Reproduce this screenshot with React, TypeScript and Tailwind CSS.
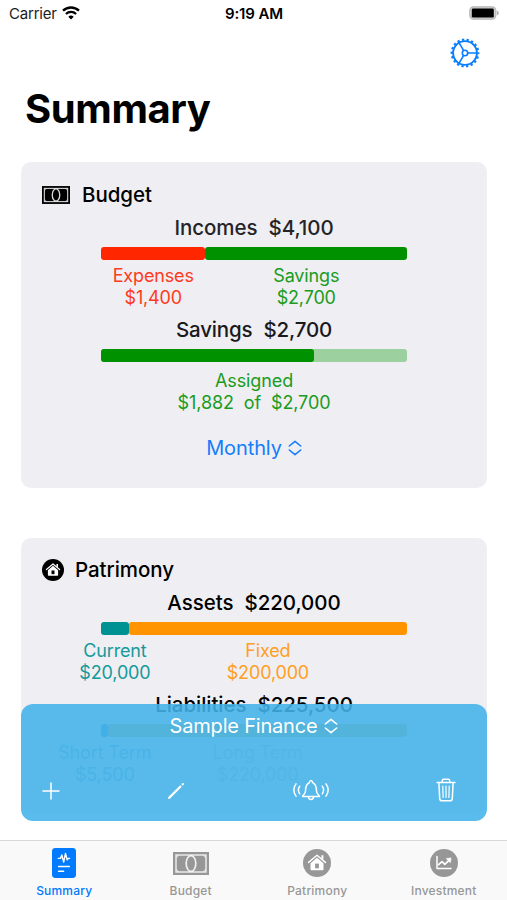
import type { ReactNode } from 'react';

type Segment = {
  weight: number;
  bar: string;
  text?: string;
  label?: string;
  value?: string;
};

function Banknote({ className }: { className: string }) {
  return (
    <svg viewBox="0 0 36 23" className={className}>
      <rect width="36" height="23" fill="currentColor" />
      <rect x="3" y="3" width="30" height="17" fill="none" stroke="white" strokeWidth="1.4" strokeOpacity="0.85" />
      <path d="M3 5.5Q5 5 5.4 3M33 5.5Q31 5 30.6 3M3 17.5Q5 18 5.4 20M33 17.5Q31 18 30.6 20" fill="none" stroke="white" strokeWidth="1" strokeOpacity="0.7" />
      <ellipse cx="18" cy="11.5" rx="4.8" ry="7.9" fill="currentColor" stroke="white" strokeWidth="1.7" strokeOpacity="0.85" />
    </svg>
  );
}

function HouseCircle({ className }: { className: string }) {
  return (
    <svg viewBox="0 0 28 28" className={className}>
      <circle cx="14" cy="14" r="14" fill="currentColor" />
      <path d="M5.6 13.4 14 6.3l8.4 7.1" fill="none" stroke="white" strokeWidth="1.5" strokeLinecap="round" strokeLinejoin="round" />
      <path d="M18.4 6.3h2v4.5l-2-1.7z" fill="white" />
      <path d="M14 8.7 7.5 14.2v6.1q0 .9.9.9h11.2q.9 0 .9-.9v-6.1z" fill="white" />
      <rect x="12.1" y="14.6" width="3.8" height="4.7" fill="currentColor" />
    </svg>
  );
}

function ChartCircle() {
  return (
    <svg viewBox="0 0 28 28" className="size-7">
      <circle cx="14" cy="14" r="14" fill="currentColor" />
      <path d="M7 7.4v12.2h14" fill="none" stroke="white" strokeWidth="1.5" strokeLinecap="round" strokeLinejoin="round" />
      <path d="m8.6 15.6 3.4-3 2.8 2.8 4.2-4" fill="none" stroke="white" strokeWidth="1.7" strokeLinecap="round" strokeLinejoin="round" />
      <path d="m16.2 9.6 4.9-.7-.7 4.8z" fill="white" stroke="white" strokeWidth=".6" strokeLinejoin="round" />
    </svg>
  );
}

function ReportIcon() {
  return (
    <svg viewBox="0 0 24 30" className="h-[30px] w-6">
      <rect width="24" height="30" rx="3.4" fill="currentColor" />
      <g fill="none" stroke="white" strokeWidth="1.5" strokeLinecap="round" strokeLinejoin="round">
        <path d="M6.2 10.4h2.2L9.8 7l1.9 7 1.8-8.6 1.7 6.500 1-1.500h1.400" strokeWidth="1.4" />
        <path d="M6.6 18.5h10.8M6.6 23.3h5" />
      </g>
    </svg>
  );
}

function Gear() {
  return (
    <svg viewBox="-15 -15 30 30" className="size-[30px] text-[#087dff]">
      <g fill="none" stroke="currentColor">
        <circle r="11.9" strokeWidth="1.9" />
        <circle r="13.4" strokeWidth="2" strokeDasharray="2.3 2.377" strokeDashoffset="1.15" />
        <circle r="2.7" strokeWidth="1.6" />
        <path d="M2.7 0H12M-1.35-2.34-6-10.4M-1.35 2.34-6 10.4" strokeWidth="1.6" />
      </g>
    </svg>
  );
}

function UpDown() {
  return (
    <svg viewBox="0 0 14 16" className="h-4 w-3.5">
      <path d="M1.3 6 7 1.4 12.7 6M1.3 10 7 14.6l5.700-4.600" fill="none" stroke="currentColor" strokeWidth="1.6" strokeLinecap="round" strokeLinejoin="round" />
    </svg>
  );
}

function StatusBar() {
  return (
    <div className="flex h-7 items-center justify-between pl-[9px] pr-2 text-[15px] leading-5 text-black">
      <div className="flex w-40 items-center gap-[5px]">
        <span className="tracking-[-0.2px] text-[#1c1c1c]">Carrier</span>
        <svg viewBox="0 0 18 14" className="mb-[3px] h-3.5 w-[18px]" fill="none" stroke="currentColor">
          <path d="M1 4.7a11.6 11.6 0 0 1 16 0" strokeWidth="2.4" />
          <path d="M3.9 8a7.4 7.4 0 0 1 10.2 0" strokeWidth="2.2" />
          <path d="M9 13.5 6.3 10.7a3.9 3.9 0 0 1 5.4 0z" fill="currentColor" stroke="none" />
        </svg>
      </div>
      <span className="text-[15px] font-semibold tracking-[-0.1px]">9:19 AM</span>
      <div className="flex w-40 justify-end">
        <svg viewBox="0 0 30 14" className="mb-[2px] h-3.5 w-[30px]">
          <rect x=".8" y=".8" width="26" height="12.4" rx="3.6" fill="#d0d0d0" stroke="#b8b8b8" strokeWidth="1.2" />
          <rect x="2.8" y="2.5" width="22" height="9" rx="1.3" fill="black" />
          <path d="M27.8 4.6q2.1.7 2.1 2.4t-2.1 2.4z" fill="#b5b5b5" />
        </svg>
      </div>
    </div>
  );
}

function Breakdown({ title, amount, segments, dim = false }: {
  title: string;
  amount: string;
  segments: Segment[];
  dim?: boolean;
}) {
  return (
    <div className="mt-[9px]">
      <h3 className={`flex h-6 items-center justify-center gap-[11px] pt-px text-[20.5px] font-medium tracking-[-0.05px] ${dim ? 'text-[#242428]' : 'text-black'}`}>
        <span>{title}</span>
        <span>{amount}</span>
      </h3>
      <div className="mx-auto mt-[7px] flex h-[13px] w-[306px]">
        {segments.map((s, i) => (
          <div key={i} className={`rounded-[3px] ${s.bar}`} style={{ flex: `${s.weight} 0 0px` }} />
        ))}
      </div>
      <div className="mx-auto mt-[5px] flex w-[306px]">
        {segments.map((s, i) => (
          <div
            key={i}
            className={`flex min-w-0 flex-col items-center whitespace-pre text-[18px] leading-[22px] tracking-[-0.15px] ${s.text}`}
            style={{ flex: `${s.weight} 0 0px` }}
          >
            <span>{s.label}</span>
            <span>{s.value}</span>
          </div>
        ))}
      </div>
    </div>
  );
}

function Card({ icon, title, className, children }: { icon: ReactNode; title: string; className: string; children: ReactNode }) {
  return (
    <section className={`ml-[21px] mr-5 rounded-[10px] bg-[#efeef3] ${className}`}>
      <div className="flex h-6 items-center gap-3 pl-[21px] text-black">
        {icon}
        <h2 className="text-[20.5px] font-medium tracking-[-0.05px]">{title}</h2>
      </div>
      {children}
    </section>
  );
}

function Toolbar() {
  return (
    <div className="absolute left-[21px] right-5 top-[704px] flex h-[117px] flex-col rounded-xl bg-[#42b3e9]/88 text-white">
      <button className="flex h-11 items-center justify-center gap-[7px] text-[20px] tracking-[-0.2px]">
        Sample Finance
        <UpDown />
      </button>
      <div className="flex flex-1 items-center pb-1.5 pl-[21px] pt-[19px]">
        <svg viewBox="0 0 18 18" className="size-[18px]">
          <path d="M9 1v16M1 9h16" stroke="currentColor" strokeWidth="1.5" strokeLinecap="round" />
        </svg>
        <svg viewBox="0 0 18 18" className="ml-[107px] size-[18px]">
          <path d="M2.1 15.9 14 4" stroke="currentColor" strokeWidth="2.2" />
          <path d="m1 17 .6-2.2 1.6 1.6zM14.3 2.3l1.2-1.2q.5-.5 1.2.2t.2 1.2l-1.2 1.2z" fill="currentColor" />
        </svg>
        <svg viewBox="0 0 38 24" className="mb-[2px] ml-[107px] h-6 w-[38px]" fill="none" stroke="currentColor" strokeWidth="1.5" strokeLinecap="round" strokeLinejoin="round">
          <path d="M10.5 18.6c0-1.5 3-2 3-5.6 0-5 1.4-7.3 3.8-8.3.3-1.4.7-2.2 1.7-2.2s1.4.8 1.7 2.2c2.4 1 3.8 3.3 3.8 8.3 0 3.6 3 4.1 3 5.6z" />
          <path d="M16.4 19.2q.4 2.4 2.6 2.4t2.6-2.4M7.7 8.2q-2.6 3.8 0 7.6M4 5.9q-4.3 6.1 0 12.2M30.3 8.2q2.6 3.8 0 7.6M34 5.9q4.3 6.1 0 12.2" />
        </svg>
        <svg viewBox="0 0 20 24" className="mb-[3px] ml-[106px] h-6 w-5" fill="none" stroke="currentColor" strokeWidth="1.5" strokeLinecap="round" strokeLinejoin="round">
          <path d="M1 4.6h18M6.3 4.4V2.5q0-1.3 1.3-1.3h4.8q1.3 0 1.3 1.3v1.9M2.9 4.8l.8 15.8q.1 2.1 2.2 2.1h8.2q2.1 0 2.2-2.1l.8-15.8" />
          <path d="m6.8 8 .3 11.5M10 8v11.5M13.2 8l-.3 11.5" strokeWidth="1.2" />
        </svg>
      </div>
    </div>
  );
}

const TABS = [
  { label: 'Summary', icon: <ReportIcon />, color: 'text-[#007aff]' },
  { label: 'Budget', icon: <Banknote className="h-[23px] w-9" />, color: 'text-[#979797]' },
  { label: 'Patrimony', icon: <HouseCircle className="size-7" />, color: 'text-[#979797]' },
  { label: 'Investment', icon: <ChartCircle />, color: 'text-[#979797]' },
];

function TabBar() {
  return (
    <nav className="absolute inset-x-0 bottom-0 grid h-[60px] grid-cols-4 border-t border-[#d8d8d8] bg-[#f9f9f9] pl-px">
      {TABS.map(tab => (
        <div key={tab.label} className={`flex flex-col items-center ${tab.color}`}>
          <div className="flex h-11 items-center">{tab.icon}</div>
          <span className="-mt-[2px] text-[12px] font-medium leading-[15px] tracking-[0.2px]">{tab.label}</span>
        </div>
      ))}
    </nav>
  );
}

export default function App() {
  return (
    <div className="relative h-[900px] w-[507px] overflow-hidden bg-white font-['Inter',sans-serif]">
      <StatusBar />
      <header>
        <div className="flex h-[49px] items-center justify-end pr-[27px]">
          <Gear />
        </div>
        <h1 className="flex h-[62px] items-center pl-[25px] pt-px text-[40px] font-bold tracking-[-0.4px] text-black">Summary</h1>
      </header>

      <Card icon={<Banknote className="h-[18px] w-7" />} title="Budget" className="mt-[23px] h-[326px] pt-[21px]">
        <Breakdown
          dim
          title="Incomes"
          amount="$4,100"
          segments={[
            { weight: 1400, bar: 'bg-[#ff2600]', text: 'text-[#ff3b1c]', label: 'Expenses', value: '$1,400' },
            { weight: 2700, bar: 'bg-[#009100]', text: 'text-[#1a9c1d]', label: 'Savings', value: '$2,700' },
          ]}
        />
        <div className="mt-[9px]">
          <h3 className="flex h-6 items-center justify-center gap-[11px] pt-px text-[20.5px] font-medium tracking-[-0.15px] text-[#1a1a1d]">
            <span>Savings</span>
            <span>$2,700</span>
          </h3>
          <div className="mx-auto mt-[7px] h-[13px] w-[306px] rounded-[3px] bg-[#9cd09f]">
            <div className="h-full rounded-[3px] bg-[#009100]" style={{ width: `${(1882 / 2700) * 100}%` }} />
          </div>
          <div className="mt-2 flex flex-col items-center whitespace-pre text-[18px] leading-[22px] tracking-[-0.1px] text-[#1a9c1d]">
            <span>Assigned</span>
            <span>{'$1,882  of  $2,700'}</span>
          </div>
        </div>
        <button className="mx-auto mt-[22px] flex h-6 items-center gap-1.5 text-[20px] tracking-[-0.1px] text-[#147efb]">
          Monthly
          <UpDown />
        </button>
      </Card>

      <Card icon={<HouseCircle className="-mr-px size-[22px]" />} title="Patrimony" className="mt-[50px] h-[275px] pt-5">
        <Breakdown
          title="Assets"
          amount="$220,000"
          segments={[
            { weight: 20000, bar: 'bg-[#009193]', text: 'text-[#149a9b]', label: 'Current', value: '$20,000' },
            { weight: 200000, bar: 'bg-[#ff9300]', text: 'text-[#ff9f22]', label: 'Fixed', value: '$200,000' },
          ]}
        />
        <Breakdown
          title="Liabilities"
          amount="$225,500"
          segments={[
            { weight: 5500, bar: 'bg-[#3f9fd8]', text: 'text-[#7eb6dc]', label: 'Short Term', value: '$5,500' },
            { weight: 220000, bar: 'bg-[#c0b070]', text: 'text-[#bfc0b2]', label: 'Long Term', value: '$220,000' },
          ]}
        />
      </Card>

      <Toolbar />
      <TabBar />
    </div>
  );
}
